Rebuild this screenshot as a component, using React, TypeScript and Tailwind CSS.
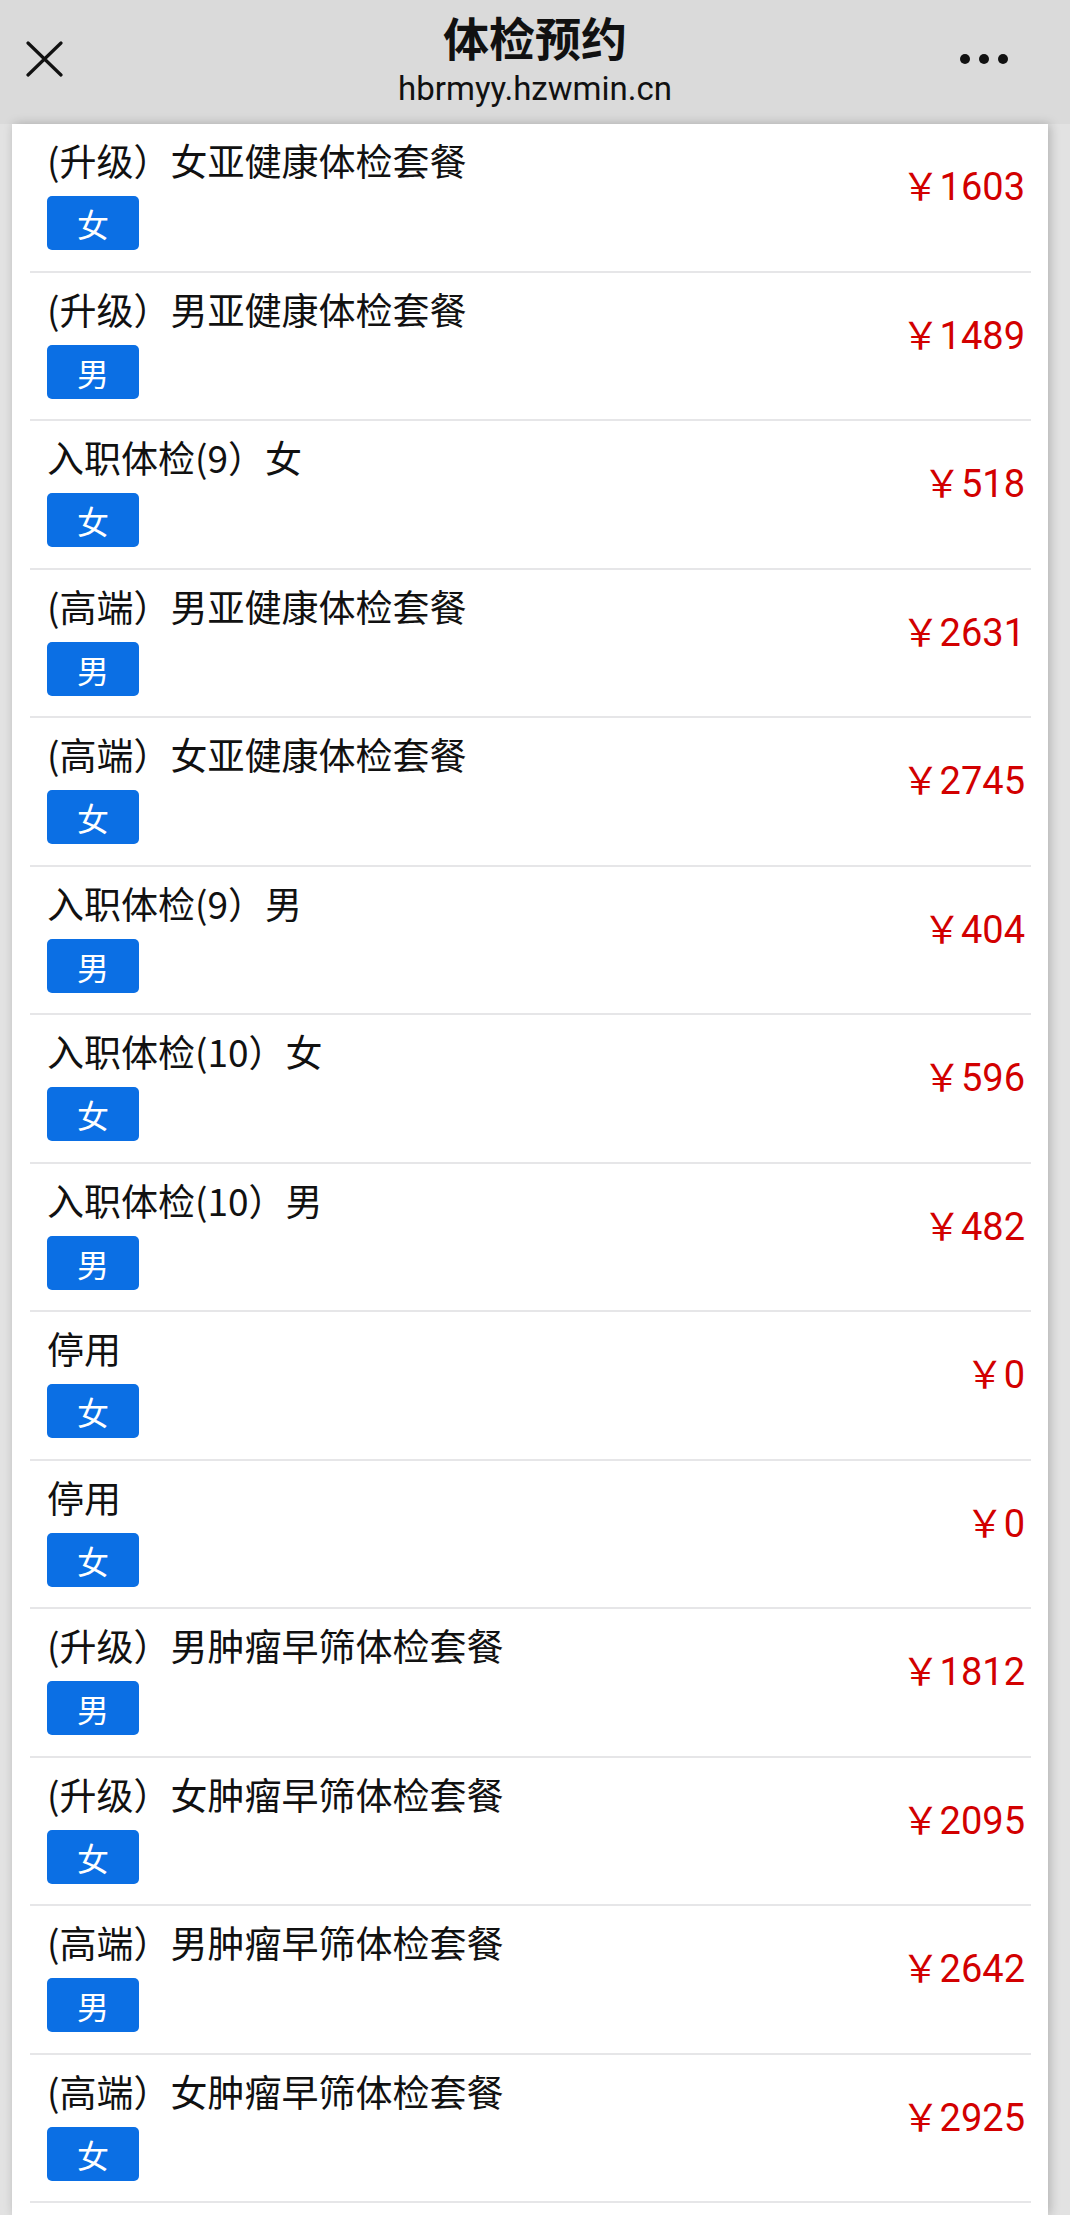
import React from 'react';

type Pkg = { name: string; sex: '男' | '女'; price: number };

const packages: Pkg[] = [
  { name: '(升级）女亚健康体检套餐', sex: '女', price: 1603 },
  { name: '(升级）男亚健康体检套餐', sex: '男', price: 1489 },
  { name: '入职体检(9）女', sex: '女', price: 518 },
  { name: '(高端）男亚健康体检套餐', sex: '男', price: 2631 },
  { name: '(高端）女亚健康体检套餐', sex: '女', price: 2745 },
  { name: '入职体检(9）男', sex: '男', price: 404 },
  { name: '入职体检(10）女', sex: '女', price: 596 },
  { name: '入职体检(10）男', sex: '男', price: 482 },
  { name: '停用', sex: '女', price: 0 },
  { name: '停用', sex: '女', price: 0 },
  { name: '(升级）男肿瘤早筛体检套餐', sex: '男', price: 1812 },
  { name: '(升级）女肿瘤早筛体检套餐', sex: '女', price: 2095 },
  { name: '(高端）男肿瘤早筛体检套餐', sex: '男', price: 2642 },
  { name: '(高端）女肿瘤早筛体检套餐', sex: '女', price: 2925 },
];

const cjk = "font-['Noto_Sans_CJK_SC',sans-serif]";

const Header: React.FC = () => (
  <header className="h-[124px] bg-[#dadada] grid grid-cols-[110px_1fr_110px]">
    {/* close */}
    <div className="pl-[26px] pt-[41px]">
      <svg width="37" height="36" viewBox="0 0 37 36" fill="none" stroke="#111" strokeWidth="3.2" strokeLinecap="round">
        <path d="M2 2 L35 34 M35 2 L2 34" />
      </svg>
    </div>

    {/* title */}
    <div className="flex flex-col items-center pt-[11px]">
      <h1 className={`${cjk} text-[46px] leading-[50px] font-bold text-[#111]`}>体检预约</h1>
      <div className="mt-[9px] font-['Roboto',sans-serif] text-[33px] leading-[37px] text-[#111]">hbrmyy.hzwmin.cn</div>
    </div>

    {/* more */}
    <div className="pt-[54px] flex gap-[9px]">
      <span className="w-[10px] h-[10px] rounded-full bg-[#111]" />
      <span className="w-[10px] h-[10px] rounded-full bg-[#111]" />
      <span className="w-[10px] h-[10px] rounded-full bg-[#111]" />
    </div>
  </header>
);

const Row: React.FC<{ item: Pkg }> = ({ item }) => (
  <div className="ml-[18px] mr-[17px] h-[148.5px] border-b-2 border-[#e6e6e8] flex justify-between items-start pl-[17px] pr-[6px]">
    <div className="pt-[16px] flex flex-col items-start">
      <div className={`${cjk} text-[37px] leading-[40px] text-[#111]`}>{item.name}</div>
      <div className={`${cjk} mt-[16px] w-[92px] h-[54px] rounded-[5px] bg-[#0b6fe4] text-white text-[32px] leading-none flex items-center justify-center`}>
        {item.sex}
      </div>
    </div>
    <div className="pt-[41px] font-['Roboto','Noto_Sans_CJK_SC',sans-serif] text-[38px] leading-[44px] text-[#d20000] whitespace-nowrap">
      ￥{item.price}
    </div>
  </div>
);

export default function App() {
  return (
    <div className="min-h-[2215px] bg-[#e2e2e2]">
      <Header />
      <div className="ml-[12px] mr-[22px] bg-white shadow-[2px_0_10px_rgba(0,0,0,0.22)] min-h-[2091px]">
        {packages.map((p, i) => (
          <Row key={i} item={p} />
        ))}
      </div>
    </div>
  );
}
